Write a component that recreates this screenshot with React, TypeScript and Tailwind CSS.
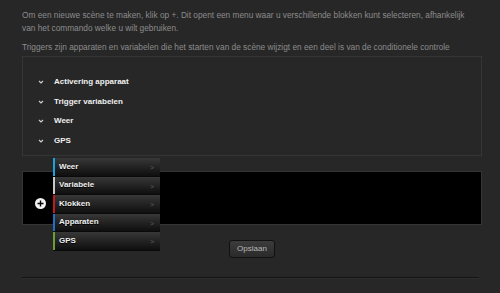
import React from 'react';

const TRIGGERS = ['Activering apparaat', 'Trigger variabelen', 'Weer', 'GPS'];

const MENU = [
  { label: 'Weer', bar: 'bg-[#1ea0dc]' },
  { label: 'Variabele', bar: 'bg-[#c8c8c8]' },
  { label: 'Klokken', bar: 'bg-[#c41a1a]' },
  { label: 'Apparaten', bar: 'bg-[#1f6fc4]' },
  { label: 'GPS', bar: 'bg-[#6c9e32]' },
];

const App: React.FC = () => {
  return (
    <div className="w-[500px] h-[293px] overflow-hidden bg-[#272727] pl-[22px] pr-[18px] pt-[9px] font-['Liberation_Sans',Arial,sans-serif]">
      <p className="mr-[2px] text-[8.3px] leading-[13px] text-[#8c8c8c]">
        Om een nieuwe scène te maken, klik op +. Dit opent een menu waar u verschillende blokken kunt selecteren, afhankelijk van het commando welke u wilt gebruiken.
      </p>
      <p className="mr-[-8px] mt-[6px] text-[8.3px] leading-[13px] text-[#8c8c8c]">
        Triggers zijn apparaten en variabelen die het starten van de scène wijzigt en een deel is van de conditionele controle
      </p>

      <div className="mt-[2px] h-[100px] border border-[#353535] pt-[15px]">
        {TRIGGERS.map(t => (
          <div key={t} className="flex items-center h-[19.7px] pl-[15px]">
            <svg width="6" height="4" viewBox="0 0 6 4" className="mr-[10px]">
              <path d="M1 1 L3 3 L5 1" stroke="#d0d0d0" strokeWidth="1.1" fill="none" />
            </svg>
            <span className="text-[8px] font-bold text-[#f0f0f0]">{t}</span>
          </div>
        ))}
      </div>

      <div className="relative mt-[15px] h-[54px] bg-black border border-[#353535] pl-[12px] pt-[26px]">
        <div className="w-[11px] h-[11px] rounded-full bg-[#f2f2f2] flex items-center justify-center">
          <svg width="7" height="7" viewBox="0 0 7 7">
            <path d="M3.5 0.5 V6.5 M0.5 3.5 H6.5" stroke="#000" strokeWidth="1.4" />
          </svg>
        </div>

        <div className="absolute left-[30px] top-[-14px] w-[107px] flex flex-col">
          {MENU.map(m => (
            <div key={m.label} className="flex h-[18.5px] border-b border-[#0a0a0a] bg-gradient-to-b from-[#383838] to-[#0f0f0f]">
              <div className={`w-[2px] ${m.bar}`} />
              <div className="flex-1 flex items-center justify-between pl-[4px] pr-[6px]">
                <span className="text-[8px] font-bold text-[#f0f0f0] [text-shadow:0_1px_0_#000]">{m.label}</span>
                <span className="text-[7px] text-[#5a5a5a] mt-[3px]">&gt;</span>
              </div>
            </div>
          ))}
        </div>
      </div>

      <div className="mt-[15px] flex justify-center">
        <button className="w-[46px] h-[18px] rounded-[3px] border border-[#111] bg-gradient-to-b from-[#3c3c3c] to-[#2a2a2a] text-[8px] text-[#b8b8b8]">
          Opslaan
        </button>
      </div>

      <div className="mt-[19px] mr-[3px] h-[1px] bg-[#141414] border-b border-[#2e2e2e] box-content" />
    </div>
  );
};

export default App;
